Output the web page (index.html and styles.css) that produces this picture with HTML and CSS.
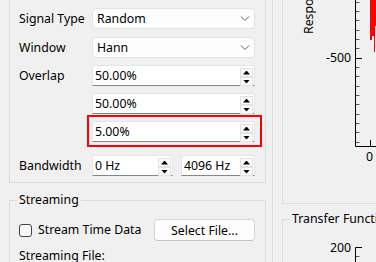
FILE: index.html
```html
<!DOCTYPE html>
<html>
<head>
<meta charset="utf-8">
<link rel="stylesheet" href="styles.css">
</head>
<body>
<div class="app">
  <div class="left">
    <div class="group params">
      <div class="row r1">
        <span class="lbl">Signal Type</span>
        <div class="combo"><span class="val">Random</span><svg class="chev" width="10" height="6" viewBox="0 0 10 6"><path d="M1 0.5 L5 4.5 L9 0.5" fill="none" stroke="#606060" stroke-width="1"/></svg></div>
      </div>
      <div class="row r2">
        <span class="lbl">Window</span>
        <div class="combo"><span class="val">Hann</span><svg class="chev" width="10" height="6" viewBox="0 0 10 6"><path d="M1 0.5 L5 4.5 L9 0.5" fill="none" stroke="#606060" stroke-width="1"/></svg></div>
      </div>
      <div class="row">
        <span class="lbl">Overlap</span>
        <div class="spin"><span class="val">50.00%</span><span class="btns"><span class="sb"><span class="tri up"></span></span><span class="sb"><span class="tri down"></span></span></span></div>
      </div>
      <div class="row">
        <span class="lbl"></span>
        <div class="spin"><span class="val">50.00%</span><span class="btns"><span class="sb"><span class="tri up"></span></span><span class="sb"><span class="tri down"></span></span></span></div>
      </div>
      <div class="row">
        <span class="lbl"></span>
        <div class="mark">
          <div class="spin"><span class="val">5.00%</span><span class="btns"><span class="sb"><span class="tri up"></span></span><span class="sb"><span class="tri down"></span></span></span></div>
        </div>
      </div>
      <div class="row bw">
        <span class="lbl">Bandwidth</span>
        <div class="spin s1"><span class="val">0 Hz</span><span class="btns"><span class="sb"><span class="tri up"></span></span><span class="sb"><span class="tri down"></span></span></span></div>
        <div class="spin s2"><span class="val">4096 Hz</span><span class="btns"><span class="sb"><span class="tri up"></span></span><span class="sb"><span class="tri down"></span></span></span></div>
      </div>
    </div>
    <fieldset class="box stream">
      <legend>Streaming</legend>
      <div class="srow">
        <label class="chk"><span class="cb"></span>Stream Time Data</label>
        <button class="btn">Select File...</button>
      </div>
      <div class="sfile">Streaming File:</div>
    </fieldset>
  </div>
  <div class="right">
    <div class="plot">
      <svg class="psvg" width="110" height="203" viewBox="283 0 110 203">
        <text x="313" y="34" transform="rotate(-90 313 34)" class="axt">Response (dB)</text>
        <text x="351" y="62" text-anchor="end" class="axt">-500</text>
        <text x="369.5" y="161" text-anchor="middle" class="axt">0</text>
        <path d="M370 0 H376 V26 H375 V52 H374 V36 H372 V40 H370 Z" fill="#ff0000"/>
        <path d="M355.5 0 V146.5 H393" fill="none" stroke="#000" stroke-width="1"/>
        <path d="M356 58.5 H362" stroke="#000" stroke-width="1"/>
        <path d="M356 2.5 H359.5 M356 11.5 H359.5 M356 20.5 H359.5 M356 30.5 H359.5 M356 39.5 H359.5 M356 48.5 H359.5 M356 67.5 H359.5 M356 76.5 H359.5 M356 86.5 H359.5 M356 95.5 H359.5 M356 104.5 H359.5 M356 114.5 H359.5 M356 123.5 H359.5 M356 132.5 H359.5 M356 142.5 H359.5" stroke="#555" stroke-width="1"/>
        <path d="M370.5 146 V140" stroke="#000" stroke-width="1"/>
      </svg>
    </div>
    <fieldset class="box transfer">
      <legend>Transfer Function</legend>
      <svg class="tsvg" width="110" height="36" viewBox="283 227 110 36">
        <text x="351" y="252" text-anchor="end" class="axt">200</text>
        <path d="M355.5 263 V247.5 H362" fill="none" stroke="#000" stroke-width="1"/>
        <path d="M356 256.5 H359.5" stroke="#555" stroke-width="1"/>
      </svg>
    </fieldset>
  </div>
</div>
</body>
</html>
```
FILE: styles.css
```css
* { box-sizing: border-box; }
html, body { margin: 0; padding: 0; }
body {
  background: #f0f0f0;
  font-family: "Noto Sans", "Liberation Sans", sans-serif;
  font-size: 12.3px;
  color: #000;
  overflow: hidden;
}
.app {
  width: 376px;
  height: 262px;
  overflow: hidden;
  display: flex;
}
.left {
  flex: none;
  width: 273px;
  padding-left: 9px;
  border-right: 1px solid #dcdcdc;
}
.group {
  width: 257px;
  border: 1px solid #dcdcdc;
  border-top: none;
}
.params {
  height: 183px;
  padding: 8px 10px 0 9px;
  display: flex;
  flex-direction: column;
  gap: 7px;
}
.row {
  display: flex;
  align-items: center;
  height: 21px;
}
.r2 { margin-top: 1px; }
.bw { margin-top: 6px; }
.lbl {
  flex: none;
  width: 73px;
  line-height: 16px;
}
.combo {
  flex: none;
  width: 163px;
  height: 21px;
  background: #fdfdfd;
  border: 1px solid #e3e3e3;
  border-radius: 4px;
  display: flex;
  align-items: center;
  padding: 0 4px 0 4px;
}
.combo .val { flex: 1; line-height: 16px; }
.chev { flex: none; margin-right: 0; margin-top: 1px; }
.spin {
  flex: none;
  width: 163px;
  height: 21px;
  background: #ffffff;
  border: 1px solid #e5e5e5;
  border-bottom-color: #868686;
  border-radius: 3px 3px 0 0;
  display: flex;
  align-items: flex-start;
  padding: 1px 1px 0 2px;
}
.spin .val { flex: 1; line-height: 18px; }
.btns {
  flex: none;
  display: flex;
  flex-direction: column;
  width: 13px;
  margin-top: 1px;
}
.sb {
  height: 9px;
  border: 1px solid #e2e2e2;
  background: #fbfbfb;
  display: flex;
  align-items: center;
  justify-content: center;
}
.tri {
  width: 7px;
  height: 4px;
  background: #000;
}
.tri.up { clip-path: polygon(50% 0, 100% 100%, 0 100%); }
.tri.down { clip-path: polygon(0 0, 100% 0, 50% 100%); }
.mark {
  border: 2px solid #ff0000;
  margin: -6px -7px -5px -5px;
  padding: 4px 5px 3px 3px;
}
.s1 { width: 81px; }
.s2 { width: 74px; margin-left: 8px; }
.box {
  margin: 0;
  border: 1px solid #dcdcdc;
  min-width: 0;
}
.box legend {
  padding: 0 2px;
  line-height: 16px;
  margin-left: -2px;
}
.stream {
  width: 257px;
  margin-top: 9px;
  padding: 11px 10px 0 9px;
  height: 90px;
}
.srow {
  display: flex;
  align-items: center;
  justify-content: space-between;
  height: 22px;
}
.chk {
  display: flex;
  align-items: center;
  line-height: 16px;
}
.cb {
  width: 13px;
  height: 13px;
  border: 1px solid #444;
  border-radius: 3px;
  background: #f9f9f9;
  margin-right: 6px;
}
.btn {
  width: 101px;
  height: 22px;
  margin: 0;
  padding: 0;
  font: inherit;
  color: #000;
  background: #fdfdfd;
  border: 1px solid #d5d5d5;
  border-bottom-color: #c4c4c4;
  border-radius: 4px;
}
.sfile {
  margin-top: 7px;
  line-height: 16px;
}
.right {
  flex: none;
  width: 130px;
  padding-left: 9px;
}
.plot {
  height: 204px;
  border-left: 1px solid #dcdcdc;
  border-bottom: 1px solid #dcdcdc;
}
.psvg, .tsvg { display: block; }
.axt {
  font-family: "Noto Sans", "Liberation Sans", sans-serif;
  font-size: 12.3px;
  fill: #000;
}
.transfer {
  margin-top: 7px;
  padding: 0;
  height: 60px;
}
.transfer legend { margin-left: 7px; }
```
